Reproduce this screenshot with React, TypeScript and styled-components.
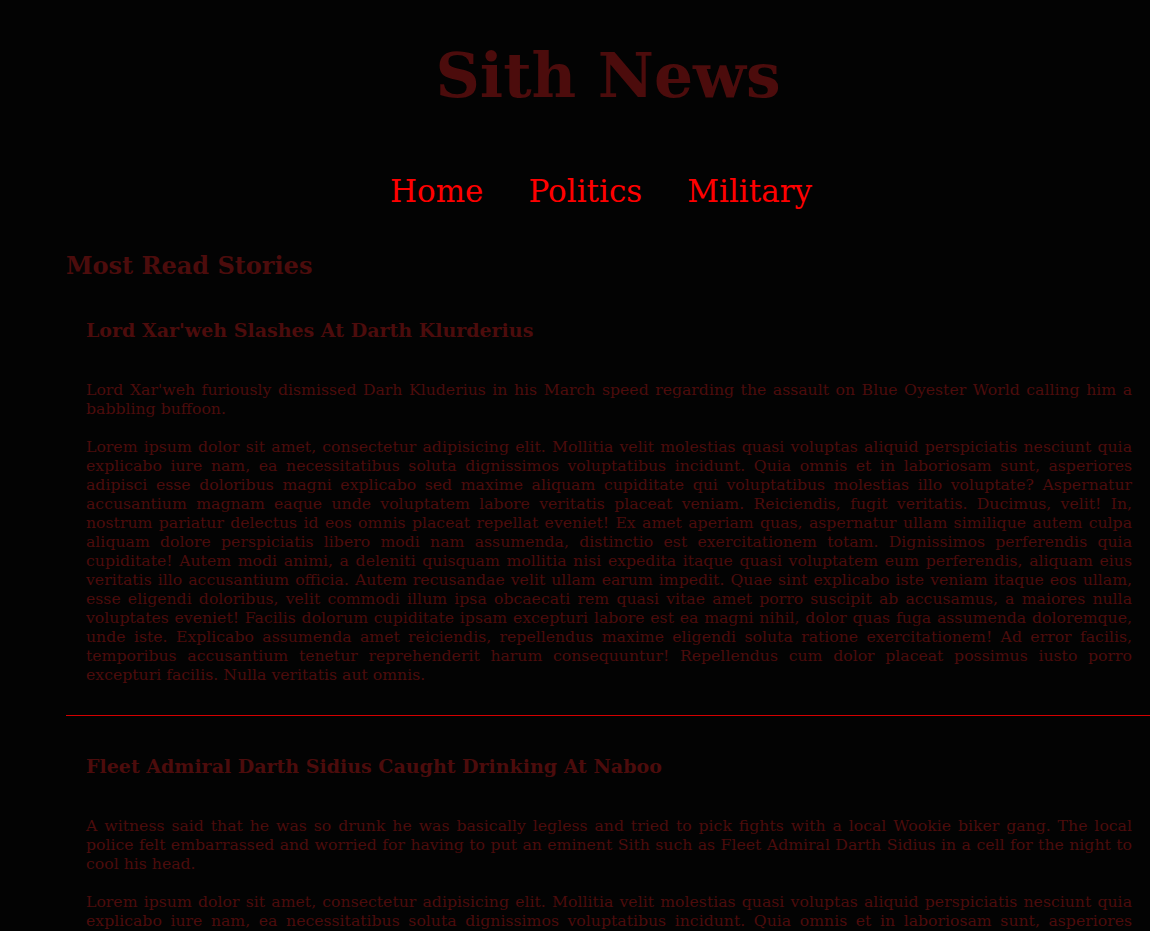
import styled, { createGlobalStyle } from "styled-components";

const GlobalStyle = createGlobalStyle`
  html, body {
    margin: 0;
    padding: 0;
    background-color: #030303;
  }
  body {
    font-family: "DejaVu Serif", "Liberation Serif", serif;
    overflow-x: hidden;
  }
`;

const Page = styled.div`
  padding-left: 66px;
  background-color: #030303;
  min-height: 931px;
`;

const Title = styled.h1`
  margin: 0;
  padding-top: 37.5px;
  font-size: 61.5px;
  line-height: 75px;
  font-weight: bold;
  text-align: center;
  color: #4c0c0c;
`;

const Nav = styled.nav`
  margin-top: 60px;
  display: flex;
  justify-content: center;
  gap: 45px;
  padding-right: 14px;
`;

const NavLink = styled.a`
  font-size: 31px;
  line-height: 37px;
  color: #ff0000;
  text-decoration: none;
`;

const SectionHeading = styled.h2`
  margin: 42px 0 0;
  font-size: 24px;
  line-height: 28px;
  font-weight: bold;
  color: #4c0c0c;
`;

const Article = styled.article`
  padding: 0 18px 31px 20px;
  border-bottom: 1px solid #d40000;
`;

const StoryTitle = styled.h3`
  margin: 39.5px 0 38.5px;
  font-size: 19px;
  line-height: 22px;
  font-weight: bold;
  color: #4c0c0c;
`;

const StoryText = styled.p`
  margin: 0 0 19px;
  font-size: 15.7px;
  line-height: 19px;
  text-align: justify;
  color: #4c0c0c;

  &:last-child {
    margin-bottom: 0;
  }
`;

const lorem =
  "Lorem ipsum dolor sit amet, consectetur adipisicing elit. Mollitia velit molestias quasi voluptas aliquid perspiciatis nesciunt quia explicabo iure nam, ea necessitatibus soluta dignissimos voluptatibus incidunt. Quia omnis et in laboriosam sunt, asperiores adipisci esse doloribus magni explicabo sed maxime aliquam cupiditate qui voluptatibus molestias illo voluptate? Aspernatur accusantium magnam eaque unde voluptatem labore veritatis placeat veniam. Reiciendis, fugit veritatis. Ducimus, velit! In, nostrum pariatur delectus id eos omnis placeat repellat eveniet! Ex amet aperiam quas, aspernatur ullam similique autem culpa aliquam dolore perspiciatis libero modi nam assumenda, distinctio est exercitationem totam. Dignissimos perferendis quia cupiditate! Autem modi animi, a deleniti quisquam mollitia nisi expedita itaque quasi voluptatem eum perferendis, aliquam eius veritatis illo accusantium officia. Autem recusandae velit ullam earum impedit. Quae sint explicabo iste veniam itaque eos ullam, esse eligendi doloribus, velit commodi illum ipsa obcaecati rem quasi vitae amet porro suscipit ab accusamus, a maiores nulla voluptates eveniet! Facilis dolorum cupiditate ipsam excepturi labore est ea magni nihil, dolor quas fuga assumenda doloremque, unde iste. Explicabo assumenda amet reiciendis, repellendus maxime eligendi soluta ratione exercitationem! Ad error facilis, temporibus accusantium tenetur reprehenderit harum consequuntur! Repellendus cum dolor placeat possimus iusto porro excepturi facilis. Nulla veritatis aut omnis.";

const stories = [
  {
    title: "Lord Xar'weh Slashes At Darth Klurderius",
    summary:
      "Lord Xar'weh furiously dismissed Darh Kluderius in his March speed regarding the assault on Blue Oyester World calling him a babbling buffoon.",
  },
  {
    title: "Fleet Admiral Darth Sidius Caught Drinking At Naboo",
    summary:
      "A witness said that he was so drunk he was basically legless and tried to pick fights with a local Wookie biker gang. The local police felt embarrassed and worried for having to put an eminent Sith such as Fleet Admiral Darth Sidius in a cell for the night to cool his head.",
  },
];

export default function App() {
  return (
    <>
      <GlobalStyle />
      <Page>
        <header>
          <Title>Sith News</Title>
          <Nav>
            <NavLink href="#">Home</NavLink>
            <NavLink href="#">Politics</NavLink>
            <NavLink href="#">Military</NavLink>
          </Nav>
        </header>
        <main>
          <SectionHeading>Most Read Stories</SectionHeading>
          {stories.map((story) => (
            <Article key={story.title}>
              <StoryTitle>{story.title}</StoryTitle>
              <StoryText>{story.summary}</StoryText>
              <StoryText>{lorem}</StoryText>
            </Article>
          ))}
        </main>
      </Page>
    </>
  );
}
